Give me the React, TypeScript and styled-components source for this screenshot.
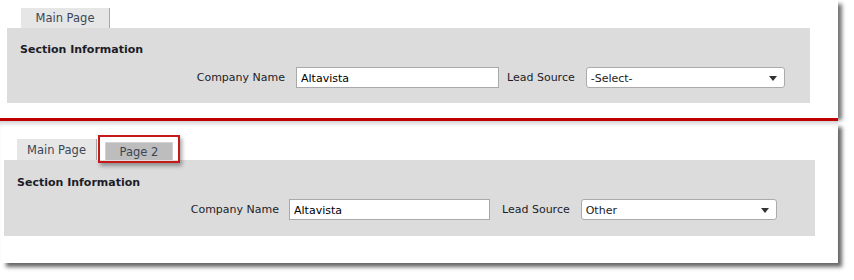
import styled, { createGlobalStyle } from "styled-components";

const GlobalStyle = createGlobalStyle`
    body {
        margin: 0;
        background: #fff;
        font-family: "DejaVu Sans", Verdana, sans-serif;
    }
`;

interface SheetType {
    padTop: number;
    padBottom: number;
}

interface SectionType {
    left: number;
    width: number;
    padTop: number;
    padBottom: number;
}

interface BoxType {
    w: number;
    ml?: number;
}

interface TabType {
    active?: boolean;
    w: number;
    h: number;
}

const Canvas = styled.div`
    width: 854px;
    height: 280px;
    background: #fff;
    overflow: hidden;
`;

const Sheet = styled.div<SheetType>`
    width: 838px;
    box-sizing: border-box;
    background: #fff;
    padding-top: ${({ padTop }) => padTop}px;
    padding-bottom: ${({ padBottom }) => padBottom}px;
    box-shadow: 5px 3px 4px -1px rgba(0, 0, 0, 0.55);
    position: relative;
`;

const BottomSheet = styled(Sheet)`
    box-shadow:
        5px 5px 4px -1px rgba(0, 0, 0, 0.6),
        inset 0 5px 5px -3px rgba(0, 0, 0, 0.22);
`;

const RedRule = styled.div`
    width: 838px;
    height: 3px;
    background: #c00000;
    position: relative;
    z-index: 2;
`;

const TabStrip = styled.div<{ left: number; gap: number }>`
    display: flex;
    align-items: flex-end;
    gap: ${({ gap }) => gap}px;
    padding-left: ${({ left }) => left}px;
`;

const Tab = styled.div<TabType>`
    width: ${({ w }) => w}px;
    height: ${({ h }) => h}px;
    box-sizing: border-box;
    display: flex;
    align-items: center;
    justify-content: center;
    white-space: nowrap;
    font-size: 11.5px;
    color: #3b4656;
    background: ${({ active }) => (active ? "#e6e6e6" : "#bdbdbd")};
    border-right: 1px solid ${({ active }) => (active ? "#a8a8a8" : "#d2d2d2")};
    border-top: ${({ active }) => (active ? "none" : "1px solid #d2d2d2")};
    border-left: ${({ active }) => (active ? "none" : "1px solid #d2d2d2")};
`;

const Highlighted = styled.div`
    position: relative;

    &:after {
        content: "";
        position: absolute;
        left: -7px;
        right: -7px;
        top: -7px;
        bottom: -3px;
        border: 2px solid #c41a1a;
        box-shadow: 2px 3px 4px rgba(0, 0, 0, 0.35);
    }
`;

const Section = styled.div<SectionType>`
    margin-left: ${({ left }) => left}px;
    width: ${({ width }) => width}px;
    box-sizing: border-box;
    background: #dcdcdc;
    padding: ${({ padTop }) => padTop}px 0 ${({ padBottom }) => padBottom}px 13px;
`;

const SectionTitle = styled.div<{ gap: number }>`
    font-size: 11px;
    font-weight: bold;
    line-height: 16px;
    color: #1c1c28;
    margin-bottom: ${({ gap }) => gap}px;
`;

const Row = styled.div`
    display: flex;
    align-items: center;
`;

const FieldLabel = styled.div<BoxType>`
    width: ${({ w }) => w}px;
    margin-left: ${({ ml = 0 }) => ml}px;
    flex: none;
    font-size: 11px;
    color: #1c1c28;
    text-align: right;
    white-space: nowrap;
`;

const InlineLabel = styled.div<{ ml: number }>`
    margin-left: ${({ ml }) => ml}px;
    font-size: 11px;
    color: #1c1c28;
    white-space: nowrap;
`;

const TextBox = styled.input<BoxType>`
    width: ${({ w }) => w}px;
    margin: 0 0 0 ${({ ml = 0 }) => ml}px;
    flex: none;
    height: 21px;
    box-sizing: border-box;
    border: 1px solid #a9a9a9;
    background: #fff;
    padding: 2px 4px 0;
    font-family: "DejaVu Sans", Verdana, sans-serif;
    font-size: 11px;
    color: #000;
    outline: none;
`;

const SelectBox = styled.div<BoxType>`
    width: ${({ w }) => w}px;
    margin-left: ${({ ml = 0 }) => ml}px;
    flex: none;
    height: 21px;
    box-sizing: border-box;
    border: 1px solid #ababab;
    border-radius: 3px;
    background: #fff;
    display: flex;
    align-items: center;
    justify-content: space-between;
    padding: 1px 7px 0 4px;
    font-size: 11px;
    color: #1c1c28;
`;

const Arrow = () => (
    <svg width="8" height="5" viewBox="0 0 8 5">
        <path d="M0 0 H8 L4 5 Z" fill="#333" />
    </svg>
);

const Form = ({ value, bottom }: { value: string; bottom?: boolean }) => (
    <Row>
        <FieldLabel w={bottom ? 262 : 265}>Company Name</FieldLabel>
        <TextBox readOnly defaultValue="Altavista" w={bottom ? 201 : 203} ml={bottom ? 10 : 11} />
        <InlineLabel ml={bottom ? 12 : 8}>Lead Source</InlineLabel>
        <SelectBox w={bottom ? 196 : 199} ml={bottom ? 11 : 11}>
            <span>{value}</span>
            <Arrow />
        </SelectBox>
    </Row>
);

export default function App() {
    return (
        <Canvas>
            <GlobalStyle />
            <Sheet padTop={8} padBottom={15}>
                <TabStrip left={21} gap={0}>
                    <Tab active w={89} h={20}>Main Page</Tab>
                </TabStrip>
                <Section left={7} width={803} padTop={14} padBottom={15}>
                    <SectionTitle gap={9}>Section Information</SectionTitle>
                    <Form value="-Select-" />
                </Section>
            </Sheet>
            <RedRule />
            <BottomSheet padTop={18} padBottom={27}>
                <TabStrip left={17} gap={8}>
                    <Tab active w={80} h={21}>Main Page</Tab>
                    <Highlighted>
                        <Tab w={68} h={18}>Page 2</Tab>
                    </Highlighted>
                </TabStrip>
                <Section left={4} width={811} padTop={15} padBottom={16}>
                    <SectionTitle gap={8}>Section Information</SectionTitle>
                    <Form value="Other" bottom />
                </Section>
            </BottomSheet>
        </Canvas>
    );
}
